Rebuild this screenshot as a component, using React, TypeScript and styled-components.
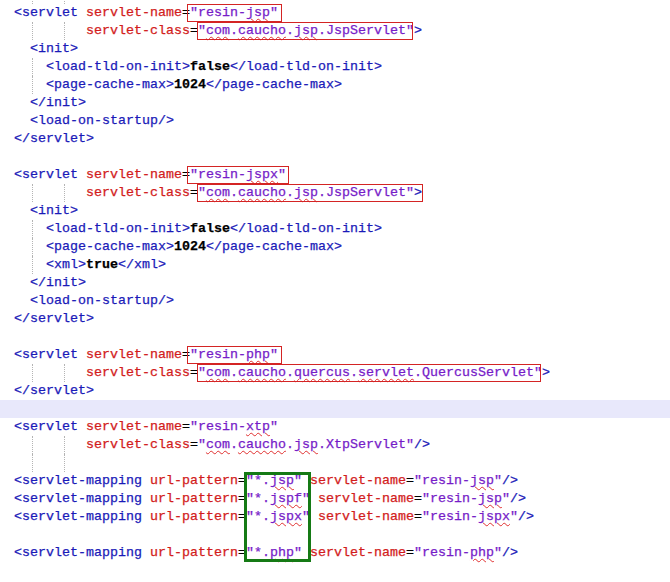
import React from "react";
import styled, { createGlobalStyle } from "styled-components";

const Global = createGlobalStyle`
  html, body { margin: 0; padding: 0; background: #ffffff; overflow: hidden; }
  body { width: 670px; height: 582px; }
`;

const Editor = styled.div`
  position: relative;
  margin-top: -14px;
  font-family: "Courier New", "Liberation Mono", monospace;
  font-size: 13.3333px;
  color: #000000;
  -webkit-text-stroke: 0.25px currentColor;
`;

const Line = styled.div<{ $hl?: boolean }>`
  height: 18px;
  line-height: 18px;
  white-space: pre;
  padding-left: 14px;
  background: ${(p) => (p.$hl ? "#e8e8fb" : "transparent")};
`;

const Tag = styled.span`
  color: #1a1ab8;
`;
const Attr = styled.span`
  color: #d21c1c;
`;
const Val = styled.span`
  color: #761cc8;
`;
const Txt = styled.span`
  color: #000000;
  font-weight: bold;
`;
const Eq = styled.span`
  color: #000000;
`;
const Squiggle = styled.span`
  text-decoration-line: underline;
  text-decoration-style: wavy;
  text-decoration-color: #e03030;
  text-decoration-thickness: 1px;
  text-underline-offset: 2px;
`;

const Pad = styled.span<{ $w: number }>`
  display: inline-block;
  vertical-align: top;
  height: 18px;
  width: ${(p) => p.$w}ch;
`;
const GuidePad = styled(Pad)`
  position: relative;
  &::before {
    content: "";
    position: absolute;
    left: 2px;
    top: 0;
    bottom: 0;
    border-left: 1px dotted #b4b4b4;
  }
`;

const Boxed = styled.span<{ $l: number; $r: number }>`
  position: relative;
  display: inline-block;
  vertical-align: top;
  height: 18px;
  &::after {
    content: "";
    position: absolute;
    top: 0;
    bottom: 0;
    left: ${(p) => -p.$l}px;
    right: ${(p) => -p.$r}px;
    border: 1px solid #d42424;
    pointer-events: none;
  }
`;

const Group = styled.div`
  position: relative;
`;
const GreenBox = styled.div`
  position: absolute;
  top: 0;
  bottom: 0;
  left: calc(14px + 29ch - 2px);
  width: 67px;
  box-sizing: border-box;
  border: 3px solid #157a15;
  pointer-events: none;
`;

const MISSPELLED = new Set(["jsp", "jspf", "jspx", "php", "com", "caucho", "quercus", "servlet", "xtp"]);

function Value({ text }: { text: string }) {
  const parts = text.split(/([A-Za-z]+)/).filter((s) => s.length > 0);
  return (
    <Val>
      "
      {parts.map((p, i) =>
        MISSPELLED.has(p) ? <Squiggle key={i}>{p}</Squiggle> : <React.Fragment key={i}>{p}</React.Fragment>
      )}
      "
    </Val>
  );
}

function Indent({ n, guides = [] }: { n: number; guides?: number[] }) {
  const stops = [0, ...guides, n];
  const segs: React.ReactNode[] = [];
  for (let i = 0; i < stops.length - 1; i++) {
    const w = stops[i + 1] - stops[i];
    if (w <= 0) continue;
    segs.push(i === 0 ? <Pad key={i} $w={w} /> : <GuidePad key={i} $w={w} />);
  }
  return <>{segs}</>;
}

function Attribute({ name, value, box }: { name: string; value: string; box?: [number, number] }) {
  return (
    <>
      <Attr>{name}</Attr>
      <Eq>=</Eq>
      {box ? (
        <Boxed $l={box[0]} $r={box[1]}>
          <Value text={value} />
        </Boxed>
      ) : (
        <Value text={value} />
      )}
    </>
  );
}

function ElementLine({ indent, guides, open, text }: { indent: number; guides?: number[]; open: string; text: string }) {
  return (
    <Line>
      <Indent n={indent} guides={guides} />
      <Tag>{`<${open}>`}</Tag>
      <Txt>{text}</Txt>
      <Tag>{`</${open}>`}</Tag>
    </Line>
  );
}

function TagLine({ indent = 0, tag }: { indent?: number; tag: string }) {
  return (
    <Line>
      <Indent n={indent} />
      <Tag>{tag}</Tag>
    </Line>
  );
}

function ServletHead({ name, box }: { name: string; box?: [number, number] }) {
  return (
    <Line>
      <Tag>{"<servlet "}</Tag>
      <Attribute name="servlet-name" value={name} box={box} />
    </Line>
  );
}

function ServletClass({ cls, box, end }: { cls: string; box?: [number, number]; end: string }) {
  return (
    <Line>
      <Indent n={9} guides={[2, 6]} />
      <Attribute name="servlet-class" value={cls} box={box} />
      <Tag>{end}</Tag>
    </Line>
  );
}

function Mapping({ pattern, name }: { pattern: string; name: string }) {
  return (
    <Line>
      <Tag>{"<servlet-mapping "}</Tag>
      <Attribute name="url-pattern" value={pattern} />
      <Tag> </Tag>
      <Attribute name="servlet-name" value={name} />
      <Tag>{"/>"}</Tag>
    </Line>
  );
}

export default function App() {
  return (
    <>
      <Global />
      <Editor>
        <Line>
          <Indent n={9} guides={[2, 6]} />
        </Line>

        <ServletHead name="resin-jsp" box={[3, 4]} />
        <ServletClass cls="com.caucho.jsp.JspServlet" box={[1, -1]} end=">" />
        <TagLine indent={2} tag="<init>" />
        <ElementLine indent={4} guides={[2]} open="load-tld-on-init" text="false" />
        <ElementLine indent={4} guides={[2]} open="page-cache-max" text="1024" />
        <TagLine indent={2} tag="</init>" />
        <TagLine indent={2} tag="<load-on-startup/>" />
        <TagLine tag="</servlet>" />
        <Line />

        <ServletHead name="resin-jspx" box={[3, 3]} />
        <ServletClass cls="com.caucho.jsp.JspServlet" box={[1, 9]} end=">" />
        <TagLine indent={2} tag="<init>" />
        <ElementLine indent={4} guides={[2]} open="load-tld-on-init" text="false" />
        <ElementLine indent={4} guides={[2]} open="page-cache-max" text="1024" />
        <ElementLine indent={4} guides={[2]} open="xml" text="true" />
        <TagLine indent={2} tag="</init>" />
        <TagLine indent={2} tag="<load-on-startup/>" />
        <TagLine tag="</servlet>" />
        <Line />

        <ServletHead name="resin-php" box={[3, 4]} />
        <ServletClass cls="com.caucho.quercus.servlet.QuercusServlet" box={[1, -1]} end=">" />
        <TagLine tag="</servlet>" />
        <Line $hl />

        <ServletHead name="resin-xtp" />
        <ServletClass cls="com.caucho.jsp.XtpServlet" end="/>" />
        <Line>
          <Indent n={9} guides={[2, 6]} />
        </Line>

        <Group>
          <Mapping pattern="*.jsp" name="resin-jsp" />
          <Mapping pattern="*.jspf" name="resin-jsp" />
          <Mapping pattern="*.jspx" name="resin-jspx" />
          <Line />
          <Mapping pattern="*.php" name="resin-php" />
          <GreenBox />
        </Group>
        <Line />
      </Editor>
    </>
  );
}
